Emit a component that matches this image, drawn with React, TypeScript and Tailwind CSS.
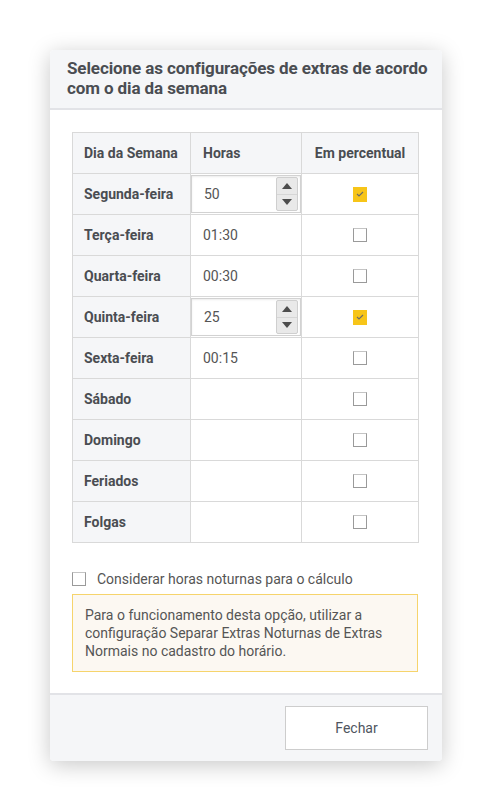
import React from 'react'

type Row = { day: string; kind: 'spin' | 'text' | 'empty'; value?: string; pct: boolean }

const rows: Row[] = [
    { day: 'Segunda-feira', kind: 'spin', value: '50', pct: true },
    { day: 'Terça-feira', kind: 'text', value: '01:30', pct: false },
    { day: 'Quarta-feira', kind: 'text', value: '00:30', pct: false },
    { day: 'Quinta-feira', kind: 'spin', value: '25', pct: true },
    { day: 'Sexta-feira', kind: 'text', value: '00:15', pct: false },
    { day: 'Sábado', kind: 'empty', pct: false },
    { day: 'Domingo', kind: 'empty', pct: false },
    { day: 'Feriados', kind: 'empty', pct: false },
    { day: 'Folgas', kind: 'empty', pct: false },
]

const Check = ({ checked }: { checked: boolean }) => (
    checked ? (
        <div className='w-[14px] h-[15px] bg-[#f7c519] flex items-center justify-center'>
            <svg width="8" height="6" viewBox="0 0 8 6">
                <path d="M1 3 L3 5 L7 1" fill="none" stroke="#6b6b6b" strokeWidth="1.1" />
            </svg>
        </div>
    ) : (
        <div className='w-[14px] h-[14px] bg-white border border-[#9a9a9a] border-t-[#c4c4c4]'></div>
    )
)

const SpinInput = ({ value }: { value: string }) => (
    <div className='h-[38px] w-full bg-white border border-[#d2d2d2] shadow-[inset_0_1px_2px_rgba(0,0,0,0.08)] flex items-center justify-between pl-[12px] pr-[2px]'>
        <span>{value}</span>
        <div className='w-[22px] h-[34px] flex flex-col border border-[#cfcfcf] bg-[#e9e9e9] rounded-[2px]'>
            <div className='flex-1 flex items-center justify-center border-b border-[#d6d6d6]'>
                <svg width="10" height="6" viewBox="0 0 10 6"><path d="M0 6 L5 0 L10 6 Z" fill="#4d4d4d" /></svg>
            </div>
            <div className='flex-1 flex items-center justify-center'>
                <svg width="10" height="6" viewBox="0 0 10 6"><path d="M0 0 L5 6 L10 0 Z" fill="#4d4d4d" /></svg>
            </div>
        </div>
    </div>
)

const App = () => {
    return (
        <div className='min-h-[811px] bg-white pt-[50px] pl-[50px] font-["Roboto",sans-serif] text-[14px] text-[#555]'>
            <div className='w-[392px] rounded-[4px] bg-white shadow-[0_4px_22px_rgba(0,0,0,0.22)] overflow-hidden'>
                <div className='bg-[#f5f6f8] border-b-2 border-[#e2e3e7] pl-[17px] pr-[8px] pt-[8px] pb-[10px]'>
                    <h2 className='text-[17px] leading-[20px] font-bold tracking-[-0.1px] text-[#4a4d52]'>
                        Selecione as configurações de extras de acordo com o dia da semana
                    </h2>
                </div>
                <div className='pt-[22px] pb-[21px] pl-[22px] pr-[24px]'>
                    <table className='w-[346px] border-collapse table-fixed'>
                        <colgroup>
                            <col className='w-[118px]' />
                            <col className='w-[111px]' />
                            <col className='w-[117px]' />
                        </colgroup>
                        <thead>
                            <tr className='h-[41px] bg-[#f5f6f8] text-[#4a4d52] font-bold'>
                                <th className='border border-[#d9d9d9] text-left pl-[11px] font-bold'>Dia da Semana</th>
                                <th className='border border-[#d9d9d9] text-left pl-[12px] font-bold'>Horas</th>
                                <th className='border border-[#d9d9d9] text-center font-bold'>Em percentual</th>
                            </tr>
                        </thead>
                        <tbody>
                            {rows.map((r) => (
                                <tr key={r.day} className='h-[41px]'>
                                    <td className='border border-[#d9d9d9] bg-[#f5f6f8] pl-[11px] font-bold text-[#4a4d52]'>{r.day}</td>
                                    <td className={`border border-[#d9d9d9] ${r.kind === 'spin' ? 'p-0' : 'pl-[12px]'}`}>
                                        {r.kind === 'spin' && <SpinInput value={r.value!} />}
                                        {r.kind === 'text' && r.value}
                                    </td>
                                    <td className='border border-[#d9d9d9]'>
                                        <div className='flex justify-center'>
                                            <Check checked={r.pct} />
                                        </div>
                                    </td>
                                </tr>
                            ))}
                        </tbody>
                    </table>

                    <label className='flex items-center gap-[11px] mt-[26px] leading-[20px]'>
                        <div className='w-[14px] h-[14px] bg-white border border-[#9a9a9a] border-t-[#c4c4c4]'></div>
                        <span>Considerar horas noturnas para o cálculo</span>
                    </label>

                    <div className='mt-[5px] border border-[#f6d46c] bg-[#fcf8f2] pl-[12px] pr-[10px] pt-[11px] pb-[11px] leading-[18px]'>
                        Para o funcionamento desta opção, utilizar a configuração Separar Extras Noturnas de Extras Normais no cadastro do horário.
                    </div>
                </div>
                <div className='bg-[#f5f6f8] border-t-2 border-[#e2e3e7] flex justify-end pt-[11px] pb-[11px] pr-[14px]'>
                    <button className='w-[143px] h-[44px] bg-white border border-[#cdcdcd] text-[#4f5560]'>Fechar</button>
                </div>
            </div>
        </div>
    )
}

export default App
